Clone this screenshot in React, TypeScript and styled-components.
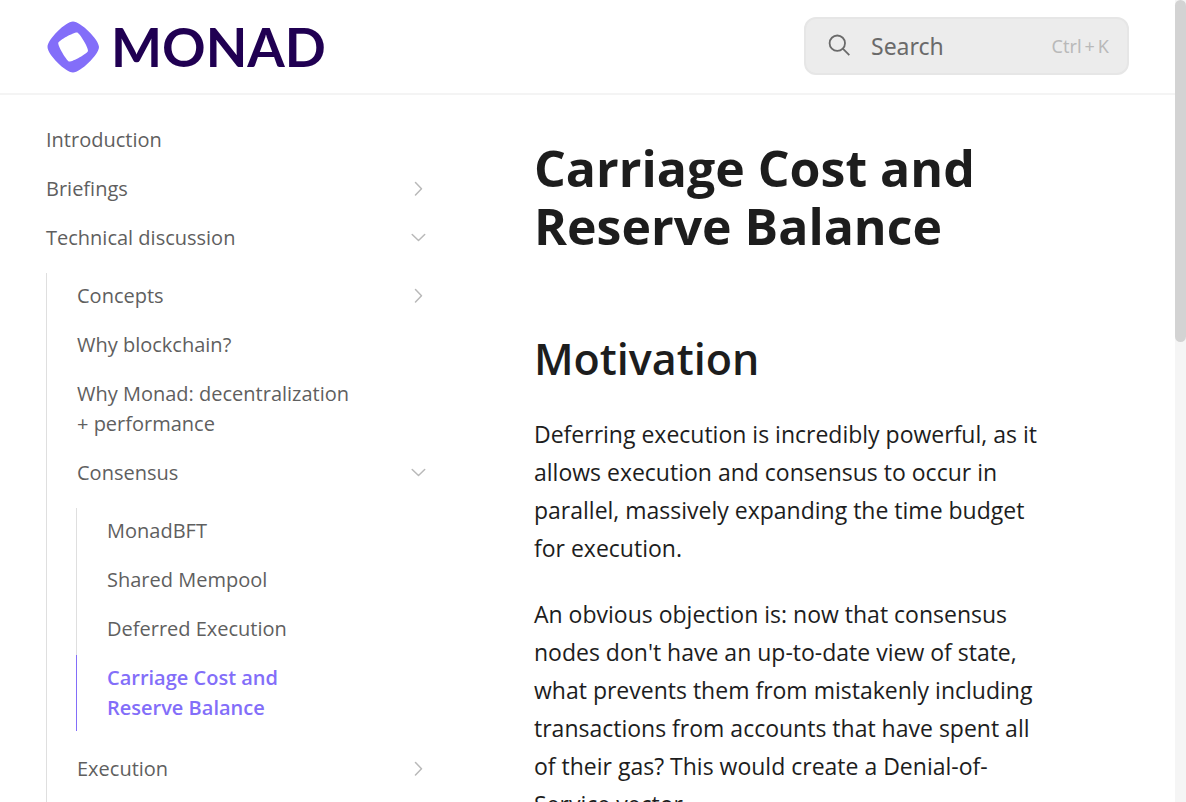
import React from "react";
import styled, { createGlobalStyle, css } from "styled-components";

const color = {
  ink: "#1d1d1d",
  muted: "#5f5f5f",
  faint: "#b9b9b9",
  line: "#dfdfdf",
  primary: "#836ef9",
  wordmark: "#200052",
};

const GlobalStyle = createGlobalStyle`
  *, *::before, *::after { box-sizing: border-box; }
  body {
    margin: 0;
    background: #fff;
    color: ${color.ink};
    font-family: "Open Sans", sans-serif;
  }
`;

const Shell = styled.div`
  display: flex;
  height: 100vh;
  overflow: hidden;
`;

const Page = styled.div`
  flex: 1;
  min-width: 0;
  overflow: hidden;
`;

const ScrollTrack = styled.div`
  flex: none;
  width: 11px;
  background: #f5f5f5;
`;

const ScrollThumb = styled.div`
  height: 342px;
  border-radius: 6px;
  background: #d3d3d3;
`;

const Header = styled.header`
  display: flex;
  align-items: center;
  justify-content: space-between;
  height: 95px;
  padding: 0 46px;
  border-bottom: 2px solid #f4f4f4;
`;

const Brand = styled.a`
  display: flex;
  align-items: center;
  gap: 11px;
  color: ${color.wordmark};
  text-decoration: none;
`;

const Wordmark = styled.span`
  font-family: Lato, sans-serif;
  font-size: 54px;
  font-weight: 700;
  line-height: 56px;
`;

const SearchBox = styled.form`
  display: flex;
  align-items: center;
  gap: 20px;
  width: 325px;
  height: 58px;
  padding: 0 18px 0 21px;
  margin-bottom: 2px;
  border: 2px solid #e6e6e6;
  border-radius: 12px;
  background: #ececec;
  color: #6a6a6a;
`;

const SearchInput = styled.input`
  flex: 1;
  min-width: 0;
  padding: 0;
  border: 0;
  outline: 0;
  background: transparent;
  color: inherit;
  font-family: "Noto Sans", sans-serif;
  font-size: 23px;
  line-height: 32px;
  &::placeholder {
    color: inherit;
    opacity: 1;
  }
`;

const Shortcut = styled.kbd`
  display: flex;
  gap: 3px;
  color: ${color.faint};
  font-family: "Noto Sans", sans-serif;
  font-size: 18px;
  line-height: 24px;
`;

const Body = styled.div`
  display: flex;
  align-items: flex-start;
  padding: 22px 120px 0 46px;
`;

const Sidebar = styled.nav`
  flex: none;
  width: 390px;
  margin-right: 98px;
`;

const List = styled.ul`
  display: flex;
  flex-direction: column;
  gap: 3px;
  margin: 0;
  padding: 0;
  list-style: none;
`;

const SubList = styled(List)`
  margin: 12px 0;
  padding-bottom: 24px;
  border-left: 1px solid ${color.line};

  & & {
    margin-left: 29px;
    padding-bottom: 0;
  }
`;

const NavLink = styled.a<{ $nested: boolean; $active: boolean }>`
  display: flex;
  align-items: center;
  gap: 52px;
  padding: 8px 9px 8px ${(p) => (p.$nested ? 30 : 0)}px;
  color: ${color.muted};
  font-size: 20px;
  line-height: 30px;
  text-decoration: none;

  ${(p) =>
    p.$active &&
    css`
      margin-left: -1px;
      border-left: 1px solid ${color.primary};
      color: ${color.primary};
      font-weight: 600;
    `}
`;

const NavLabel = styled.span`
  flex: 1;
  min-width: 0;
`;

const ChevronSlot = styled.span`
  display: flex;
  flex: none;
  width: 18px;
`;

const Article = styled.main`
  flex: 1;
  min-width: 0;
  padding-top: 22px;
`;

const Title = styled.h1`
  margin: 0 0 74px;
  font-size: 50px;
  font-weight: 700;
  line-height: 58px;
`;

const Heading = styled.h2`
  margin: 0 0 26px;
  font-size: 43px;
  font-weight: 600;
  line-height: 60px;
`;

const Paragraph = styled.p`
  margin: 0 0 28px;
  font-size: 23px;
  line-height: 38px;
`;

const Logo = () => (
  <svg width="54" height="54" viewBox="0 0 54 54" aria-hidden="true">
    <path
      fill={color.primary}
      fillRule="evenodd"
      d="M27 1.500C19.500 1.500 1.500 19.500 1.500 27S19.500 52.500 27 52.500 53 34.500 53 27 34.500 1.500 27 1.500ZM23 41.500C20.500 40.800 11.500 25.500 12.300 22.800S28.500 11.800 31.200 12.500 42.700 28.200 42 30.900 25.700 42.200 23 41.500Z"
    />
  </svg>
);

const SearchIcon = () => (
  <svg width="24" height="24" viewBox="0 0 24 24" fill="none" stroke="currentColor" strokeWidth="1.800" aria-hidden="true">
    <circle cx="10.300" cy="9.200" r="7.700" />
    <path d="M15.800 14.700 22.300 21.200" />
  </svg>
);

const Chevron = ({ open }: { open: boolean }) => (
  <svg width="18" height="18" viewBox="0 0 18 18" fill="none" stroke={color.faint} strokeWidth="1.500" strokeLinecap="round" strokeLinejoin="round" aria-hidden="true">
    <path d={open ? "M3.200 5.500 9.500 11.500 15.700 5.500" : "M6.500 2.500 12.500 8.700 6.500 15"} />
  </svg>
);

type Item = { label: string; expandable?: boolean; active?: boolean; children?: Item[] };

const items: Item[] = [
  { label: "Introduction" },
  { label: "Briefings", expandable: true },
  {
    label: "Technical discussion",
    expandable: true,
    children: [
      { label: "Concepts", expandable: true },
      { label: "Why blockchain?" },
      { label: "Why Monad: decentralization + performance" },
      {
        label: "Consensus",
        expandable: true,
        children: [
          { label: "MonadBFT" },
          { label: "Shared Mempool" },
          { label: "Deferred Execution" },
          { label: "Carriage Cost and Reserve Balance", active: true },
        ],
      },
      { label: "Execution", expandable: true },
    ],
  },
];

const NavItem = ({ item, nested }: { item: Item; nested: boolean }) => (
  <li>
    <NavLink href="#" $nested={nested} $active={!!item.active} aria-current={item.active ? "page" : undefined}>
      <NavLabel>{item.label}</NavLabel>
      <ChevronSlot>{item.expandable && <Chevron open={!!item.children} />}</ChevronSlot>
    </NavLink>
    {item.children && (
      <SubList>
        {item.children.map((child) => (
          <NavItem key={child.label} item={child} nested />
        ))}
      </SubList>
    )}
  </li>
);

export default function App() {
  return (
    <Shell>
      <GlobalStyle />
      <Page>
        <Header>
          <Brand href="#">
            <Logo />
            <Wordmark>MONAD</Wordmark>
          </Brand>
          <SearchBox role="search">
            <SearchIcon />
            <SearchInput type="text" placeholder="Search" aria-label="Search" />
            <Shortcut>
              <span>Ctrl</span>
              <span>+</span>
              <span>K</span>
            </Shortcut>
          </SearchBox>
        </Header>
        <Body>
          <Sidebar aria-label="Table of contents">
            <List>
              {items.map((item) => (
                <NavItem key={item.label} item={item} nested={false} />
              ))}
            </List>
          </Sidebar>
          <Article>
            <Title>Carriage Cost and Reserve Balance</Title>
            <Heading>Motivation</Heading>
            <Paragraph>
              Deferring execution is incredibly powerful, as it allows execution and consensus to occur in
              parallel, massively expanding the time budget for execution.
            </Paragraph>
            <Paragraph>
              An obvious objection is: now that consensus nodes don't have an up-to-date view of state, what
              prevents them from mistakenly including transactions from accounts that have spent all of their
              gas? This would create a Denial-of-Service vector.
            </Paragraph>
          </Article>
        </Body>
      </Page>
      <ScrollTrack aria-hidden="true">
        <ScrollThumb />
      </ScrollTrack>
    </Shell>
  );
}
